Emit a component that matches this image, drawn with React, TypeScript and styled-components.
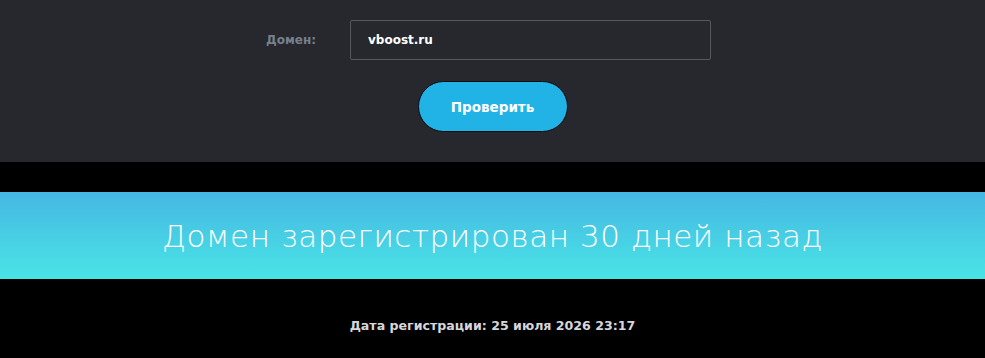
import styled, { createGlobalStyle } from "styled-components";

const GlobalStyle = createGlobalStyle`
    body{
        margin: 0;
        background: #000;
        font-family: "DejaVu Sans", "Noto Sans", sans-serif;
    }
`

const CheckPanel = styled.div`
    background: #26282d;
    height: 162px;
    box-sizing: border-box;
    padding-top: 20px;
    display: flex;
    flex-direction: column;
    align-items: center;
`

const FieldRow = styled.div`
    display: grid;
    grid-template-columns: 84px 361px;
    align-items: center;
    margin-left: -8px;
`

const Label = styled.label`
    color: #76808d;
    font-size: 12px;
    font-weight: bold;
`

const Input = styled.input`
    height: 40px;
    box-sizing: border-box;
    background: #26282d;
    border: 1px solid #55585e;
    border-radius: 2px;
    padding: 0 17px;
    color: #fff;
    font-family: inherit;
    font-size: 12px;
    font-weight: bold;
    outline: none;
`

const CheckButton = styled.button`
    margin-top: 21px;
    width: 150px;
    height: 51px;
    border-radius: 26px;
    border: 1px solid #0b0d10;
    background: #22b3e6;
    color: #fff;
    font-family: inherit;
    font-size: 13.5px;
    font-weight: bold;
    cursor: pointer;
`

const Banner = styled.div`
    margin-top: 30px;
    height: 87px;
    background: linear-gradient(to bottom, #46b7e3, #49e4e6);
    display: flex;
    align-items: center;
    justify-content: center;
    color: #fff;
    font-size: 31px;
    letter-spacing: 0.55px;
    font-weight: 300;
`

const Details = styled.div`
    padding-top: 39px;
    text-align: center;
    color: #d6d7da;
    font-size: 12.6px;
    font-weight: bold;
`

const App: React.FC = () => {
    return (
        <>
            <GlobalStyle />
            <CheckPanel>
                <FieldRow>
                    <Label>Домен:</Label>
                    <Input defaultValue="vboost.ru" />
                </FieldRow>
                <CheckButton>Проверить</CheckButton>
            </CheckPanel>
            <Banner>Домен зарегистрирован 30 дней назад</Banner>
            <Details>Дата регистрации: 25 июля 2026 23:17</Details>
        </>
    )
}

export default App;
